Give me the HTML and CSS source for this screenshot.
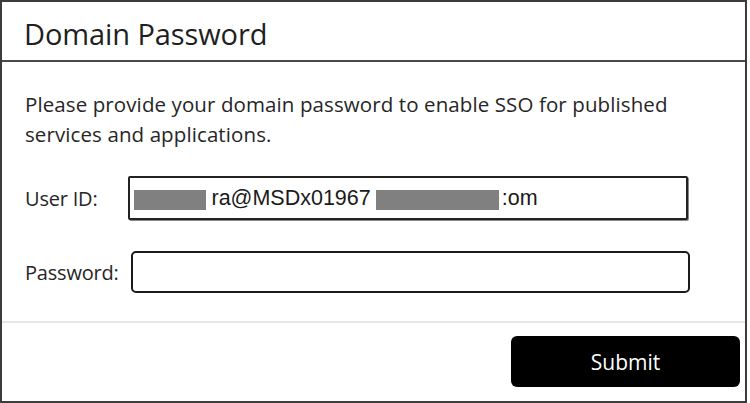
FILE: index.html
```html
<!DOCTYPE html>
<html>
<head>
<meta charset="utf-8">
<link rel="stylesheet" href="styles.css">
</head>
<body>
<div class="dialog">
  <div class="header"><h1 class="title">Domain Password</h1></div>
  <div class="content">
    <p class="desc">Please provide your domain password to enable SSO for published services and applications.</p>
    <div class="row row-user">
      <label class="label">User ID:</label>
      <div class="input input-user">
        <span class="redact redact-a"></span>
        <span class="val">ra@MSDx01967</span>
        <span class="redact redact-b"></span>
        <span class="val">:om</span>
      </div>
    </div>
    <div class="row row-pass">
      <label class="label">Password:</label>
      <div class="input input-pass"></div>
    </div>
  </div>
  <div class="footer">
    <button class="submit">Submit</button>
  </div>
</div>
</body>
</html>
```
FILE: styles.css
```css
html, body { margin: 0; padding: 0; background: #fff; }
body { font-family: "Open Sans", "Noto Sans", sans-serif; color: #222; }
.dialog {
  width: 747px; height: 403px; box-sizing: border-box;
  border: 2px solid #3c3c3c;
  display: flex; flex-direction: column;
}
.header {
  height: 58px; border-bottom: 2px solid #4a4a4a;
  display: flex; align-items: center; padding-left: 22px;
}
.title { margin: 0; font-weight: 400; font-size: 29px; color: #1f1f1f; letter-spacing: -0.1px; position: relative; top: 2px; }
.content {
  flex: 1; padding: 27px 0 0 23px; border-bottom: 2px solid #e6e6e6;
}
.desc { margin: 0; font-size: 20.5px; line-height: 30px; width: 670px; color: #262626; letter-spacing: 0.1px; }
.row { display: flex; align-items: center; }
.row-user { margin-top: 27px; }
.row-pass { margin-top: 31px; }
.label { font-size: 20px; color: #262626; letter-spacing: -0.2px; }
.input {
  box-sizing: border-box; border: 2px solid #1a1a1a; border-radius: 4px; background: #fff;
  display: flex; align-items: center;
}
.input-user { margin-left: 31px; width: 560px; height: 44px; padding-left: 4px; border-color: #222; border-radius: 2px; box-shadow: 1px 1px 0 #888; }
.input-pass { margin-left: 12px; width: 559px; height: 42px; border-width: 2.5px; border-radius: 5px; }
.redact { display: inline-block; height: 20px; background: #808080; margin-top: 3px; }
.redact-a { width: 72px; margin-right: 5px; }
.redact-b { width: 123px; margin-left: 5px; margin-right: 3px; }
.val { font-family: "Liberation Sans", Arial, sans-serif; font-size: 21.5px; color: #1a1a1a; }
.footer { height: 78px; display: flex; align-items: center; justify-content: flex-end; padding-right: 5px; }
.submit {
  width: 229px; height: 51px; background: #000; color: #fff; border: none; border-radius: 6px;
  font-family: "Open Sans", "Noto Sans", sans-serif; font-size: 21px; margin-top: -1px;
}
```
